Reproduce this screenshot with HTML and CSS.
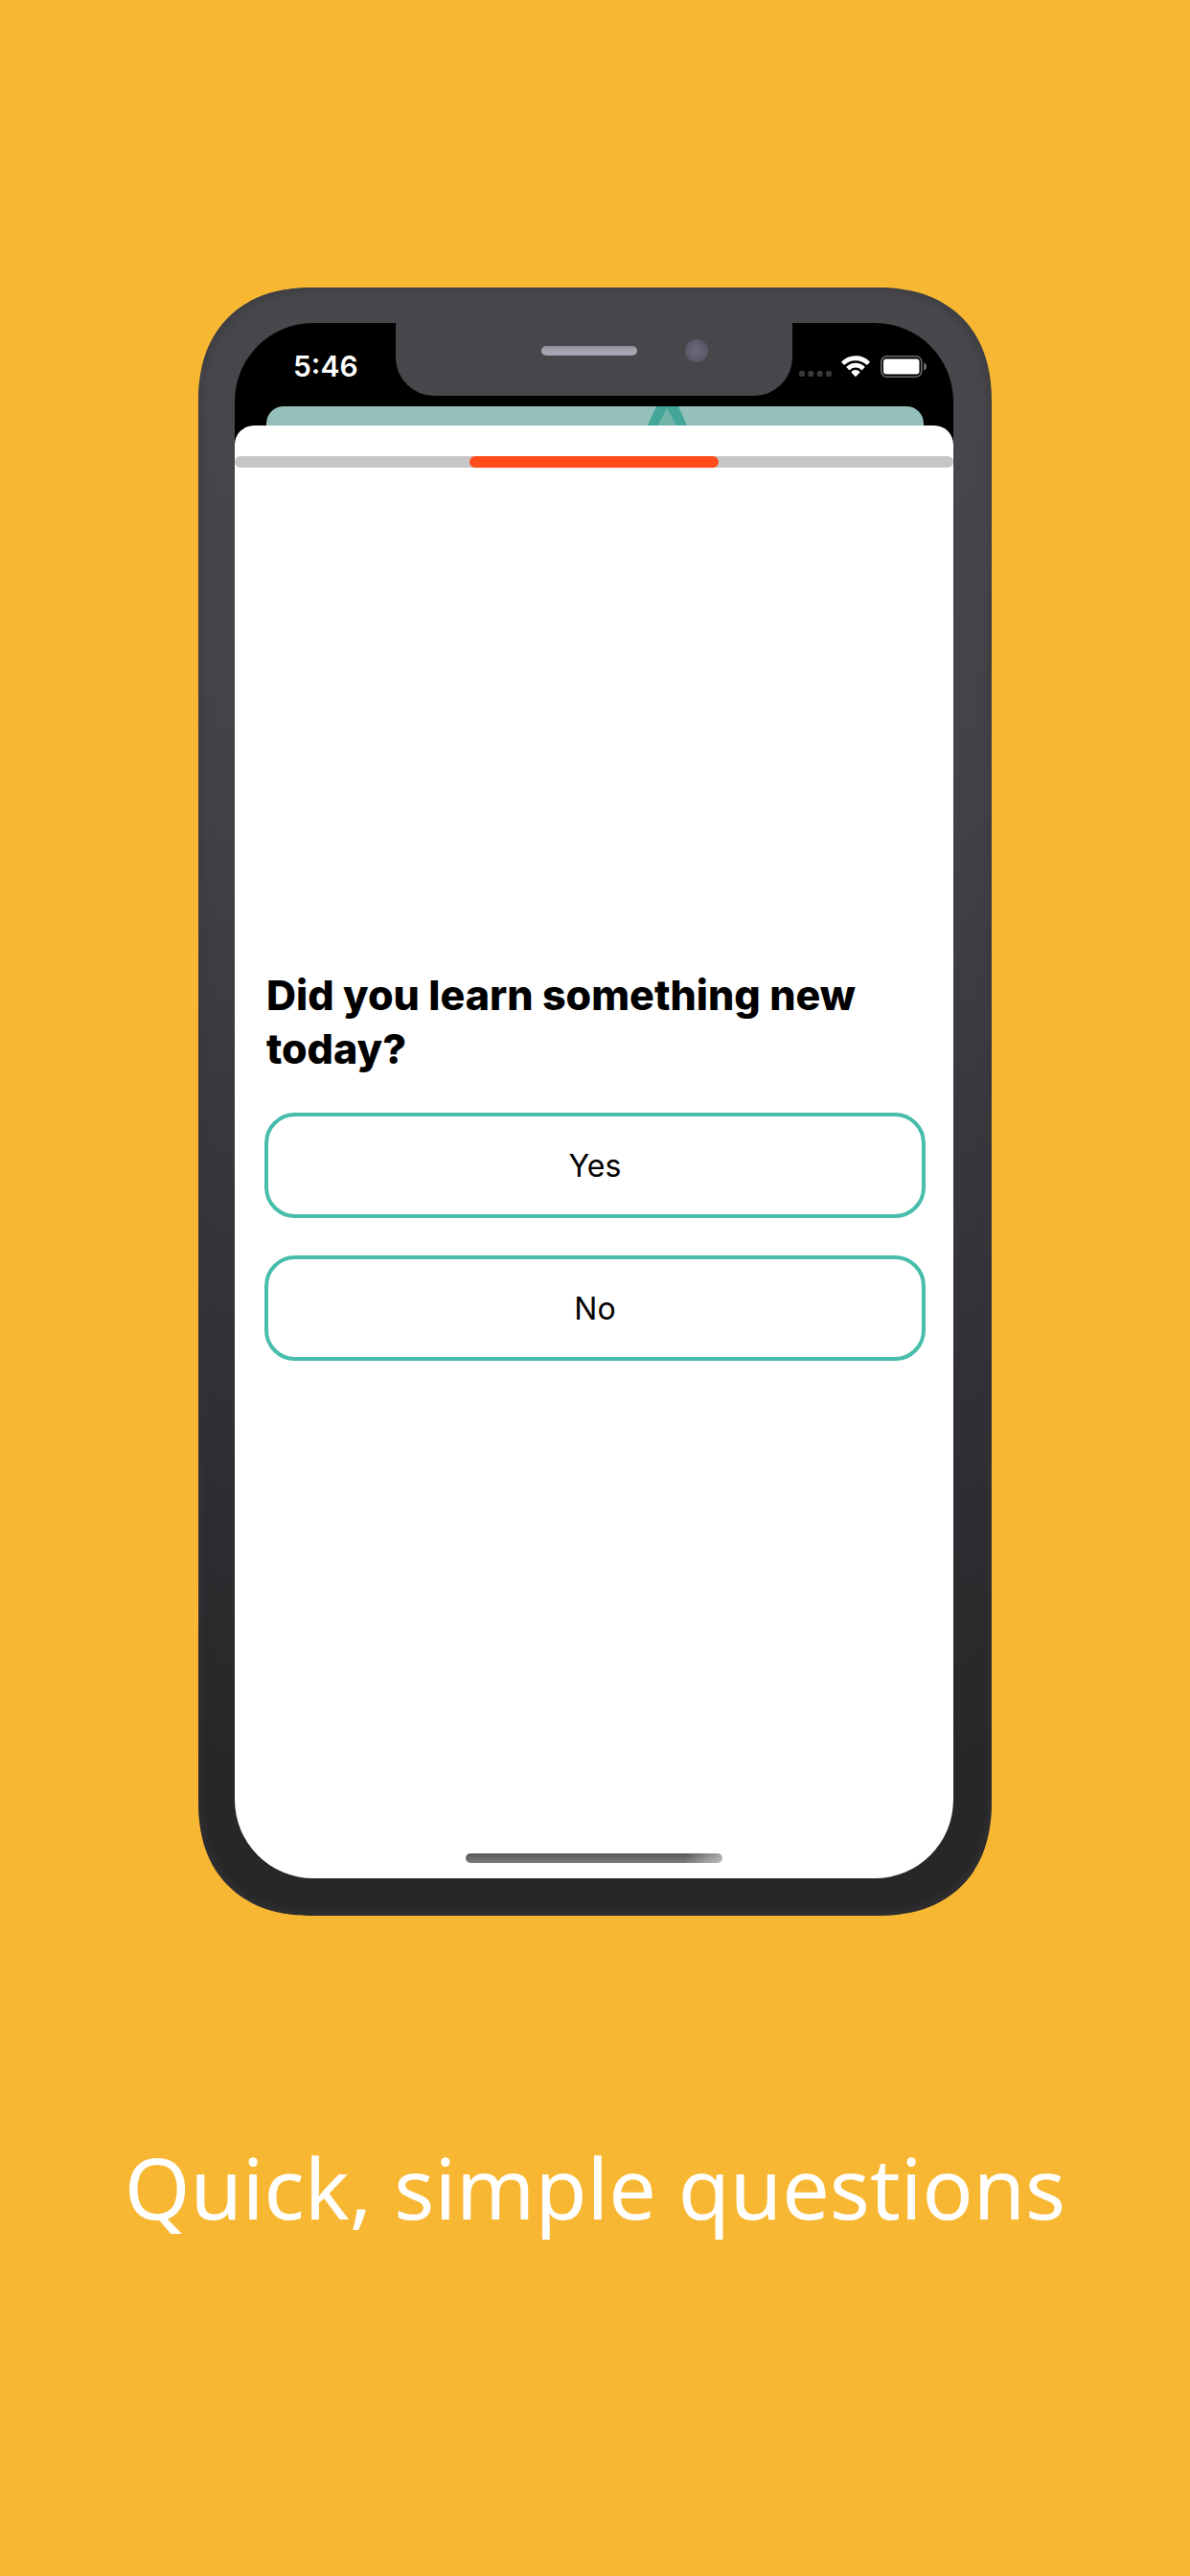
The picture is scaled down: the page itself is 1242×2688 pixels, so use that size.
FILE: index.html
```html
<!DOCTYPE html>
<html lang="en">
<head>
<meta charset="utf-8">
<meta name="viewport" content="width=device-width, initial-scale=1">
<title>Quick, simple questions</title>
<link rel="stylesheet" href="styles.css">
</head>
<body>
<main class="promo">
  <section class="phone">
    <div class="screen">
      <header class="status-bar">
        <time class="clock">5:46</time>
        <div class="notch">
          <span class="speaker"></span>
          <span class="camera"></span>
        </div>
        <div class="indicators">
          <svg class="signal" width="34" height="7" viewBox="0 0 34 7" fill="#3a3a3a" aria-label="No signal">
            <rect width="6" height="6" rx="2"/><rect x="9.3" width="6" height="6" rx="2"/><rect x="18.7" width="6" height="6" rx="2"/><rect x="28" width="6" height="6" rx="2"/>
          </svg>
          <svg class="wifi" width="31" height="23" viewBox="0 0 31 23" fill="#fff" aria-label="Wi-Fi">
            <path d="M15 .3C9.400 .3 4.200 2.500 .4 6.200a.8.8 0 0 0 0 1.100l2.300 2.300c.3.3.8.3 1.100 0A16.200 16.200 0 0 1 15 5.200c4.300 0 8.200 1.600 11.200 4.400.3.3.8.3 1.100 0l2.300-2.300a.8.8 0 0 0 0-1.100A21 21 0 0 0 15 .3Z"/>
            <path d="M15 7.700c-3.600 0-6.900 1.400-9.400 3.700a.8.8 0 0 0 0 1.100l2.500 2.400c.3.300.7.300 1 0a8.700 8.700 0 0 1 11.800 0c.3.300.7.300 1 0l2.500-2.400a.8.8 0 0 0 0-1.100A13.700 13.700 0 0 0 15 7.700Z"/>
            <path d="M15 15.100c-1.700 0-3.200.6-4.300 1.600-.4.300-.4.800 0 1.100l3.800 4c.3.300.7.300 1 0l3.800-4c.4-.3.4-.8 0-1.100a6.300 6.300 0 0 0-4.300-1.600Z"/>
          </svg>
          <svg class="battery" width="49" height="23" viewBox="0 0 49 23" aria-label="Battery full">
            <rect x=".8" y=".8" width="42" height="21.400" rx="6" fill="none" stroke="#6c6c6c" stroke-width="1.600"/>
            <rect x="3" y="3.500" width="37.500" height="16" rx="3" fill="#fff"/>
            <path d="M45.300 7.500c1.700.5 2.700 2.100 2.700 4s-1 3.500-2.700 4Z" fill="#7a7a7a"/>
          </svg>
        </div>
      </header>
      <div class="back-card">
        <svg class="peak" width="41" height="20" viewBox="0 0 41 20" aria-hidden="true">
          <path d="M9 0h23l9 20H0Z" fill="#41a698"/>
          <path d="M20.300 1.500 30 20H10.500Z" fill="#70b3a9"/>
        </svg>
      </div>
      <div class="sheet">
        <div class="progress" role="progressbar" aria-label="Question progress" aria-valuemin="0" aria-valuemax="3" aria-valuenow="2">
          <div class="progress-step"></div>
        </div>
        <div class="question">
          <h1 class="question-title">Did you learn something new today?</h1>
          <button class="answer" type="button">Yes</button>
          <button class="answer" type="button">No</button>
        </div>
        <div class="home-indicator"></div>
      </div>
    </div>
  </section>
  <p class="caption">Quick, simple questions</p>
</main>
</body>
</html>
```

FILE: styles.css
```css
* {
  box-sizing: border-box;
}

body {
  margin: 0;
  min-height: 100vh;
  background: #f7b733;
  font-family: Inter, "Liberation Sans", sans-serif;
}

.promo {
  display: flex;
  flex-direction: column;
  align-items: center;
  padding: 300px 0 0;
}

/* Phone body */
.phone {
  display: flex;
  width: calc(100% * 2 / 3);
  aspect-ratio: 828 / 1699;
  padding: 37px 40px 39px 38px;
  border-radius: 108px;
  background: linear-gradient(#48474c, #434247 30%, #323136 65%, #272729 90%);
  box-shadow: inset 0 0 6px 4px rgba(56, 55, 60, 0.5);
}

@supports (corner-shape: superellipse(1.2)) {
  .phone {
    border-radius: 120px;
    corner-shape: superellipse(1.2);
  }
}

.screen {
  display: flex;
  flex: 1;
  flex-direction: column;
  overflow: hidden;
  border-radius: 82px;
  background: #000;
}

/* Status bar */
.status-bar {
  display: grid;
  grid-template-columns: 1fr 414px 1fr;
  height: 87px;
}

.clock {
  padding: 27px 0 0 61px;
  color: #fff;
  font-size: 30px;
  font-weight: 600;
  line-height: 36px;
}

.notch {
  display: flex;
  align-items: center;
  gap: 50px;
  height: 76px;
  padding: 0 0 18px 152px;
  border-radius: 0 0 40px 40px;
  background: #47464b;
}

.speaker {
  width: 100px;
  height: 10px;
  border-radius: 5px;
  background: linear-gradient(#8d8c98, #a9a8b4 60%, #a3a2ae);
}

.camera {
  width: 24px;
  height: 24px;
  border: 2px solid #5a5966;
  border-radius: 50%;
  background: radial-gradient(circle at 45% 50%, #6a697a, #565563);
}

.indicators {
  display: flex;
  align-items: flex-end;
  gap: 10px;
  height: 57px;
  padding-left: 7px;
}

/* Sheet behind the question */
.back-card {
  height: 20px;
  margin: 0 31px 0 33px;
  border-radius: 18px 18px 0 0;
  background: #95bfba;
}

.peak {
  display: block;
  margin-left: 58%;
}

/* Question sheet */
.sheet {
  display: flex;
  flex: 1;
  flex-direction: column;
  padding: 32px 0 16px;
  border-radius: 20px 20px 0 0;
  background: #fff;
}

.progress {
  display: flex;
  justify-content: center;
  height: 12px;
  border-radius: 6px;
  background: #c6c6c8;
}

.progress-step {
  width: calc(100% / 3 + 10px);
  border-radius: 6px;
  background: #fe4c1b;
}

.question {
  display: flex;
  flex: 1;
  flex-direction: column;
  justify-content: center;
  gap: 39px;
  padding: 8px 29px 0 31px;
}

.question-title {
  margin: 0;
  padding-left: 2px;
  color: #000;
  font-size: 43px;
  font-weight: 800;
  line-height: 56px;
}

.answer {
  height: 110px;
  border: 4px solid #48bdac;
  border-radius: 32px;
  background: #fff;
  color: #000;
  font-family: inherit;
  font-size: 32px;
}

.home-indicator {
  align-self: center;
  width: 268px;
  height: 10px;
  border-radius: 5px;
  background: linear-gradient(100deg, transparent 85%, rgba(255, 255, 255, 0.5)), linear-gradient(#555, #7d7d7d);
}

.caption {
  margin: 223px 0 0;
  color: #fff;
  font-family: "Noto Sans", sans-serif;
  font-size: 88px;
  line-height: 120px;
  text-align: center;
}
```
